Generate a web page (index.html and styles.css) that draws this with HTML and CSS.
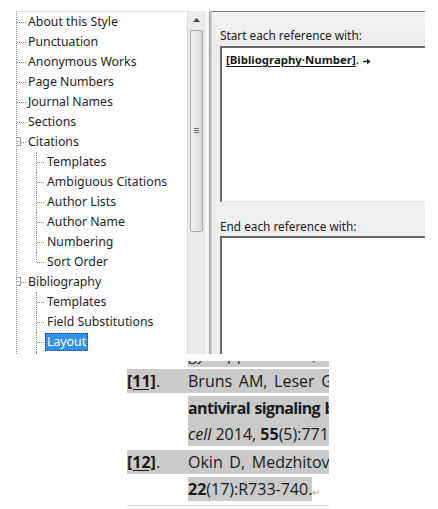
FILE: index.html
```html
<!DOCTYPE html>
<html>
<head>
<meta charset="utf-8">
<link rel="stylesheet" href="styles.css">
</head>
<body>
<div class="shot">
  <div class="tree">
    <div class="item">About this Style</div>
    <div class="item">Punctuation</div>
    <div class="item">Anonymous Works</div>
    <div class="item">Page Numbers</div>
    <div class="item">Journal Names</div>
    <div class="item">Sections</div>
    <div class="item exp">Citations</div>
    <div class="group">
      <div class="item"><span>Templates</span></div>
      <div class="item"><span>Ambiguous Citations</span></div>
      <div class="item"><span>Author Lists</span></div>
      <div class="item"><span>Author Name</span></div>
      <div class="item"><span>Numbering</span></div>
      <div class="item last"><span>Sort Order</span></div>
    </div>
    <div class="item exp">Bibliography</div>
    <div class="group">
      <div class="item"><span>Templates</span></div>
      <div class="item"><span>Field Substitutions</span></div>
      <div class="item"><span class="sel">Layout</span></div>
      <div class="item"><span>Title Capitalization</span></div>
    </div>
  </div>
  <div class="sb">
    <div class="sb-up">
      <svg width="7" height="4" viewBox="0 0 7 4"><path d="M0 4 L3.5 0 L7 4 Z" fill="#4a4a4a"/></svg>
    </div>
    <div class="thumb">
      <div class="grip"><i></i><i></i><i></i></div>
    </div>
  </div>
  <div class="sep"></div>
  <div class="panel">
    <div class="label l1">Start each reference with:</div>
    <div class="box b1"><span class="field">[Bibliography·Number]</span>.<svg class="tab" width="8" height="7" viewBox="0 0 8 7"><path d="M0 3.5 H5" stroke="#1a1a1a" stroke-width="1.4"/><path d="M4 0.5 L7.5 3.5 L4 6.5 Z" fill="#1a1a1a"/></svg></div>
    <div class="label l2">End each reference with:</div>
    <div class="box b2"></div>
  </div>
</div>
<div class="doc">
  <div class="frag"><div class="fragline"><span>gy. pp. 1-9 (Cam ) op, y</span></div></div>
  <div class="row"><div class="band full"><span class="num"><b><u>[11]</u></b>.</span><span class="txt sp4">Bruns AM, Leser GP, Lamb RA, Horvath CM: The innate immune sensor</span></div></div>
  <div class="row"><div class="band inner tall"><span class="txt bold">antiviral signaling by regulating MDA5-RNA interaction and filament</span></div></div>
  <div class="row"><div class="band inner top"><span class="txt"><i>cell</i> 2014, <b>55</b>(5):771-781.</span></div></div>
  <div class="row"><div class="band full"><span class="num"><b><u>[12]</u></b>.</span><span class="txt sp4">Okin D, Medzhitov R: Evolution of inflammatory diseases. Current</span></div></div>
  <div class="row"><div class="band inner fit"><span class="txt"><b>22</b>(17):R733-740.</span></div><span class="pm">↵</span></div>
  <div class="rule"></div>
</div>
</body>
</html>
```
FILE: styles.css
```css
html, body {
  margin: 0;
  padding: 0;
  background: #ffffff;
}
body {
  width: 438px;
  height: 509px;
  overflow: hidden;
  color: #1e1e1e;
  font-family: "Noto Sans", "Open Sans", sans-serif;
}

/* ---------- top screenshot ---------- */
.shot {
  display: flex;
  margin: 11px 13px 0 16px;
  height: 343px;
}
.tree {
  width: 170px;
  border-top: 1px solid #e4e4e4;
  border-left: 1px dotted #8a8a8a;
  overflow: hidden;
  font-size: 12.3px;
}
.item {
  position: relative;
  height: 20px;
  line-height: 20px;
  padding-left: 11px;
  white-space: nowrap;
}
.item::before {
  content: "";
  position: absolute;
  left: 0;
  top: 10px;
  width: 9px;
  border-top: 1px dotted #8a8a8a;
}
.item.exp::after {
  content: "";
  position: absolute;
  left: -5px;
  top: 5px;
  width: 7px;
  height: 7px;
  border: 1px solid #9a9a9a;
  background: linear-gradient(#9a9a9a, #9a9a9a) center / 5px 1px no-repeat, #fff;
}
.group {
  margin-left: 19px;
}
.group .item {
  padding-left: 9px;
}
.group .item::before {
  left: 1px;
  width: 7px;
}
.group .item::after {
  content: "";
  position: absolute;
  left: 0;
  top: 0;
  bottom: 0;
  border-left: 1px dotted #8a8a8a;
}
.group .item.last::after {
  bottom: 10px;
}
.group .item span {
  display: inline-block;
  padding: 0 2px;
  line-height: 18px;
  vertical-align: top;
  margin-top: 1px;
}
.group .item span.sel {
  background: #3391ea;
  color: #ffffff;
  outline: 1px dotted #24466e;
  outline-offset: -1px;
}

.sb {
  width: 16px;
  background: #ececec;
  border-left: 1px solid #dcdcdc;
  display: flex;
  flex-direction: column;
  align-items: center;
}
.sb-up {
  height: 18px;
  display: flex;
  align-items: center;
  justify-content: center;
}
.thumb {
  width: 13px;
  height: 202px;
  margin-top: 1px;
  box-sizing: border-box;
  border: 1px solid #a9a9a9;
  border-radius: 2px;
  background: linear-gradient(90deg, #f3f3f3, #e2e2e2 60%, #d6d6d6);
  display: flex;
  align-items: center;
  justify-content: center;
}
.grip {
  display: flex;
  flex-direction: column;
  gap: 1px;
  margin-top: -1px;
}
.grip i {
  display: block;
  width: 5px;
  height: 1px;
  background: #6e6e6e;
}
.sep {
  width: 4px;
  background: #f7f7f7;
  border-right: 1px solid #9b9b9b;
  border-left: 1px solid #e0e0e0;
}
.panel {
  flex: 1;
  display: flex;
  flex-direction: column;
  background: linear-gradient(#f3f3f3, #ececec 40px, #f0f0f0 60px);
  border-top: 1px solid #7c7c7c;
  border-left: 2px solid #c9c9c9;
  padding-left: 8px;
  font-size: 11.8px;
  color: #1a1a1a;
}
.label {
  line-height: 16px;
  white-space: nowrap;
}
.l1 {
  padding-top: 15px;
  padding-bottom: 3px;
}
.l2 {
  padding-top: 16px;
  padding-bottom: 2px;
}
.box {
  background: #ffffff;
  border-top: 2px solid #6a6a6a;
  border-left: 2px solid #6a6a6a;
  box-sizing: border-box;
}
.b1 {
  height: 156px;
  padding: 3px 4px;
  line-height: 16px;
  border-bottom: 1px solid #e2e2e2;
  white-space: nowrap;
}
.b2 {
  flex: 1;
}
.field {
  font-weight: 700;
  font-size: 11.4px;
  text-decoration: underline;
  text-underline-offset: 2px;
}
.tab {
  margin-left: 4px;
  vertical-align: -1px;
}

/* ---------- document fragment ---------- */
.doc {
  margin-left: 127px;
  width: 202px;
  font-family: "Open Sans", "Noto Sans", sans-serif;
  font-size: 16px;
  color: #1a1a1a;
}
.frag {
  height: 6px;
  margin-top: 7px;
  overflow: hidden;
  padding-left: 61px;
}
.fragline {
  margin-top: -21px;
  height: 27px;
  white-space: nowrap;
  overflow: hidden;
}
.fragline span {
  display: inline-block;
  width: 141px;
  height: 25px;
  line-height: 24px;
  margin-top: 2px;
  background: #cacaca;
  overflow: hidden;
  word-spacing: 14px;
  color: #2a2a2a;
}
.row {
  height: 27px;
  display: flex;
  align-items: flex-start;
  white-space: nowrap;
  overflow: hidden;
}
.band {
  background: #cacaca;
  height: 24px;
  line-height: 24px;
  margin-top: 2px;
  display: flex;
  overflow: hidden;
}
.band.full {
  width: 202px;
}
.band.inner {
  margin-left: 61px;
  width: 141px;
}
.band.tall {
  height: 25px;
}
.band.top {
  margin-top: 0;
  height: 25px;
  line-height: 26px;
}
.band.fit {
  width: auto;
}
.num {
  width: 61px;
  flex: none;
}
.num u {
  text-underline-offset: 2px;
}
.txt {
  flex: none;
}
.sp4 {
  word-spacing: 2.5px;
}
.bold {
  font-weight: 700;
  letter-spacing: -0.65px;
  word-spacing: 1px;
}
.pm {
  color: #9a9a9a;
  font-size: 10px;
  line-height: 30px;
  margin-top: 2px;
}
.rule {
  margin-top: 3px;
  border-top: 1px solid #d4d4d4;
}
```
